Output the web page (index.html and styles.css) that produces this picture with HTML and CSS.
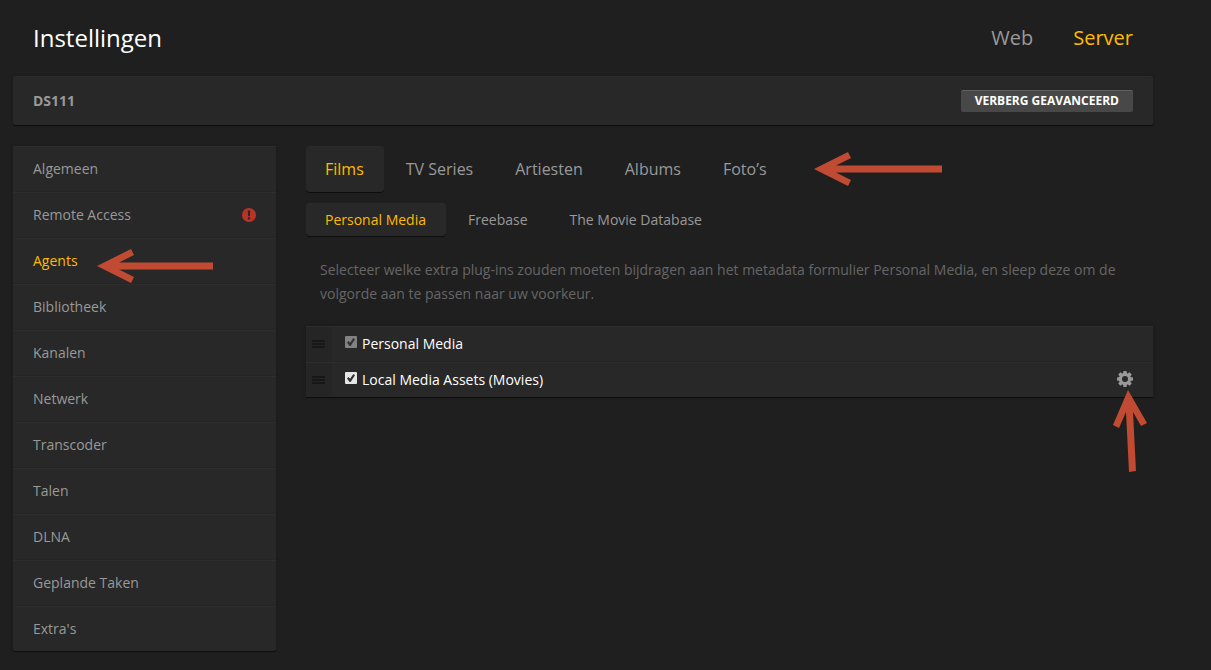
FILE: index.html
```html
<!DOCTYPE html>
<html lang="nl">
<head>
<meta charset="utf-8">
<meta name="viewport" content="width=device-width, initial-scale=1">
<title>Instellingen</title>
<link rel="stylesheet" href="styles.css">
</head>
<body>
<div class="page">
  <header class="page-header">
    <h1 class="page-title">Instellingen</h1>
    <nav class="header-nav">
      <a href="#web">Web</a>
      <a href="#server" class="active">Server</a>
    </nav>
  </header>

  <div class="server-bar panel">
    <span class="server-name">DS111</span>
    <button type="button" class="advanced-button">VERBERG GEAVANCEERD</button>
  </div>

  <div class="columns">
    <nav class="sidebar panel">
      <a href="#algemeen">Algemeen</a>
      <a href="#remote">Remote Access
        <svg class="alert-icon" viewBox="0 0 14 14" aria-hidden="true"><circle cx="7" cy="7" r="7" fill="#b93428"/><path d="M5.700 2.400h2.600l-.4 5.800h-1.800zM5.900 9.300h2.200v2.200h-2.200z" fill="#282828"/></svg>
      </a>
      <a href="#agents" class="active">Agents
        <svg class="arrow arrow-agents" viewBox="0 0 128 36" aria-hidden="true"><path d="M0 18 34 1l3 6-15 7.500h94v7H22L37 29l-3 6z"/></svg>
      </a>
      <a href="#bibliotheek">Bibliotheek</a>
      <a href="#kanalen">Kanalen</a>
      <a href="#netwerk">Netwerk</a>
      <a href="#transcoder">Transcoder</a>
      <a href="#talen">Talen</a>
      <a href="#dlna">DLNA</a>
      <a href="#taken">Geplande Taken</a>
      <a href="#extras">Extra's</a>
    </nav>

    <main class="content">
      <nav class="tabs tabs-large">
        <a href="#films" class="active">Films</a>
        <a href="#tv">TV Series</a>
        <a href="#artiesten">Artiesten</a>
        <a href="#albums">Albums</a>
        <a href="#fotos">Foto’s</a>
        <svg class="arrow arrow-tabs" viewBox="0 0 128 36" aria-hidden="true"><path d="M0 18 34 1l3 6-15 7.500h106v7H22L37 29l-3 6z"/></svg>
      </nav>
      <nav class="tabs tabs-small">
        <a href="#personal" class="active">Personal Media</a>
        <a href="#freebase">Freebase</a>
        <a href="#tmdb">The Movie Database</a>
      </nav>
      <p class="help-text">Selecteer welke extra plug-ins zouden moeten bijdragen aan het metadata formulier Personal Media, en sleep deze om de volgorde aan te passen naar uw voorkeur.</p>
      <ul class="agent-list panel">
        <li>
          <span class="grip"><svg viewBox="0 0 13 8" aria-hidden="true"><path d="M0 0h13v2H0zM0 3h13v2H0zM0 6h13v2H0z"/></svg></span>
          <label><input type="checkbox" checked disabled>Personal Media</label>
        </li>
        <li>
          <span class="grip"><svg viewBox="0 0 13 8" aria-hidden="true"><path d="M0 0h13v2H0zM0 3h13v2H0zM0 6h13v2H0z"/></svg></span>
          <label><input type="checkbox" checked>Local Media Assets (Movies)</label>
          <button type="button" class="gear-button" aria-label="Instellingen">
            <svg viewBox="-8 -8 16 16" aria-hidden="true">
              <g fill="#999">
                <path id="teeth" d="M-1.500-8h3l.6 3h-4.200zM-1.500 8h3l.6-3h-4.200zM-8-1.500v3l3 .6v-4.200zM8-1.500v3l-3 .6v-4.200z"/>
                <use href="#teeth" transform="rotate(45)"/>
              </g>
              <circle r="4.500" fill="none" stroke="#999" stroke-width="3"/>
            </svg>
          </button>
          <svg class="arrow arrow-gear" viewBox="0 0 36 84" aria-hidden="true"><path d="M16 1 35 34l-6 3-8-14 3 59-7 1-3-60-7 16-6-3z"/></svg>
        </li>
      </ul>
    </main>
  </div>
</div>
</body>
</html>
```
FILE: styles.css
```css
* {
  box-sizing: border-box;
}

body {
  margin: 0;
  background: #1f1f1f;
  color: #999;
  font: 14px/24px "Open Sans", "Noto Sans", sans-serif;
}

a {
  color: inherit;
  text-decoration: none;
}

.page {
  max-width: 1198px;
  padding: 0 45px 18px 13px;
}

.panel {
  background: #282828;
  box-shadow: 0 1px 0 #0e0e0e, 0 0 3px #1a1a1a;
}

.page .active {
  color: #ffba00;
}

.page-header {
  display: flex;
  justify-content: space-between;
  align-items: center;
  height: 76px;
  padding: 0 20px;
}

.page-title {
  margin: 0;
  color: #fff;
  font-size: 24px;
  font-weight: 400;
}

.header-nav {
  display: flex;
  gap: 40px;
  font-size: 20px;
}

.server-bar {
  display: flex;
  justify-content: space-between;
  align-items: center;
  height: 49px;
  padding: 0 20px;
  border-radius: 2px;
  border-top: 1px solid #2b2b2b;
}

.server-name {
  font-weight: 700;
}

.advanced-button {
  height: 22px;
  padding: 0 14px 2px;
  border: 0;
  border-top: 1px solid #606060;
  border-radius: 2px;
  background: #484848;
  color: #fff;
  font: 700 12px/19px "Open Sans", sans-serif;
}

.columns {
  display: flex;
  align-items: flex-start;
  gap: 30px;
  margin-top: 21px;
}

.sidebar {
  flex: 0 0 263px;
  border-radius: 2px;
}

.sidebar a {
  position: relative;
  display: flex;
  justify-content: space-between;
  align-items: center;
  height: 46px;
  padding: 0 20px;
  border-top: 1px solid #2d2d2d;
  border-bottom: 1px solid #252525;
}

.sidebar a:last-child {
  height: 45px;
  border-bottom: 0;
}

.alert-icon {
  width: 14px;
  height: 14px;
}

.content {
  flex: 1;
  min-width: 0;
}

.tabs {
  position: relative;
  display: flex;
  gap: 2px;
}

.tabs a {
  padding: 0 20px 0 19px;
  border-radius: 4px;
}

.tabs a + a {
  padding-left: 20px;
}

.tabs .active {
  background: #282828;
  box-shadow: 0 1px 0 #0e0e0e, inset 0 1px 0 #2b2b2b;
}

.tabs-large {
  font-size: 16px;
  line-height: 46px;
}

.tabs-small {
  margin-top: 11px;
  line-height: 33px;
}

.help-text {
  margin: 22px 0 20px;
  padding: 0 14px;
  color: #666;
}

.agent-list {
  margin: 0;
  padding: 0;
  list-style: none;
}

.agent-list li {
  position: relative;
  display: flex;
  align-items: center;
  height: 36px;
  border-top: 1px solid #2d2d2d;
  border-bottom: 1px solid #242424;
}

.agent-list li:last-child {
  height: 35px;
  border-bottom: 0;
}

.grip {
  display: flex;
  align-items: center;
  align-self: stretch;
  width: 26px;
  padding-left: 6px;
  background: #252525;
}

.grip svg {
  width: 13px;
  height: 8px;
  fill: #171717;
}

.agent-list label {
  display: flex;
  align-items: center;
  gap: 5px;
  padding-left: 13px;
  color: #fff;
}

.agent-list input {
  appearance: none;
  display: grid;
  place-items: center;
  width: 12px;
  height: 12px;
  margin: 0 0 4px;
  border-radius: 1px;
  background: #e6e6e6;
}

.agent-list input:checked::before {
  content: "";
  width: 8px;
  height: 8px;
  background: #333;
  clip-path: polygon(0 55%, 20% 38%, 38% 60%, 80% 0, 100% 15%, 45% 100%, 32% 100%);
}

.agent-list input:disabled {
  background: #828282;
}

.gear-button {
  display: flex;
  margin: 0 20px 2px auto;
  padding: 0;
  border: 0;
  background: none;
}

.gear-button svg {
  width: 16px;
  height: 16px;
}

.arrow {
  position: absolute;
  fill: #c14a32;
  pointer-events: none;
}

.arrow-agents {
  top: 9px;
  left: 84px;
  width: 128px;
  height: 36px;
}

.arrow-tabs {
  top: 5px;
  left: 508px;
  width: 128px;
  height: 36px;
}

.arrow-gear {
  top: 26px;
  right: 5px;
  width: 36px;
  height: 84px;
}
```
